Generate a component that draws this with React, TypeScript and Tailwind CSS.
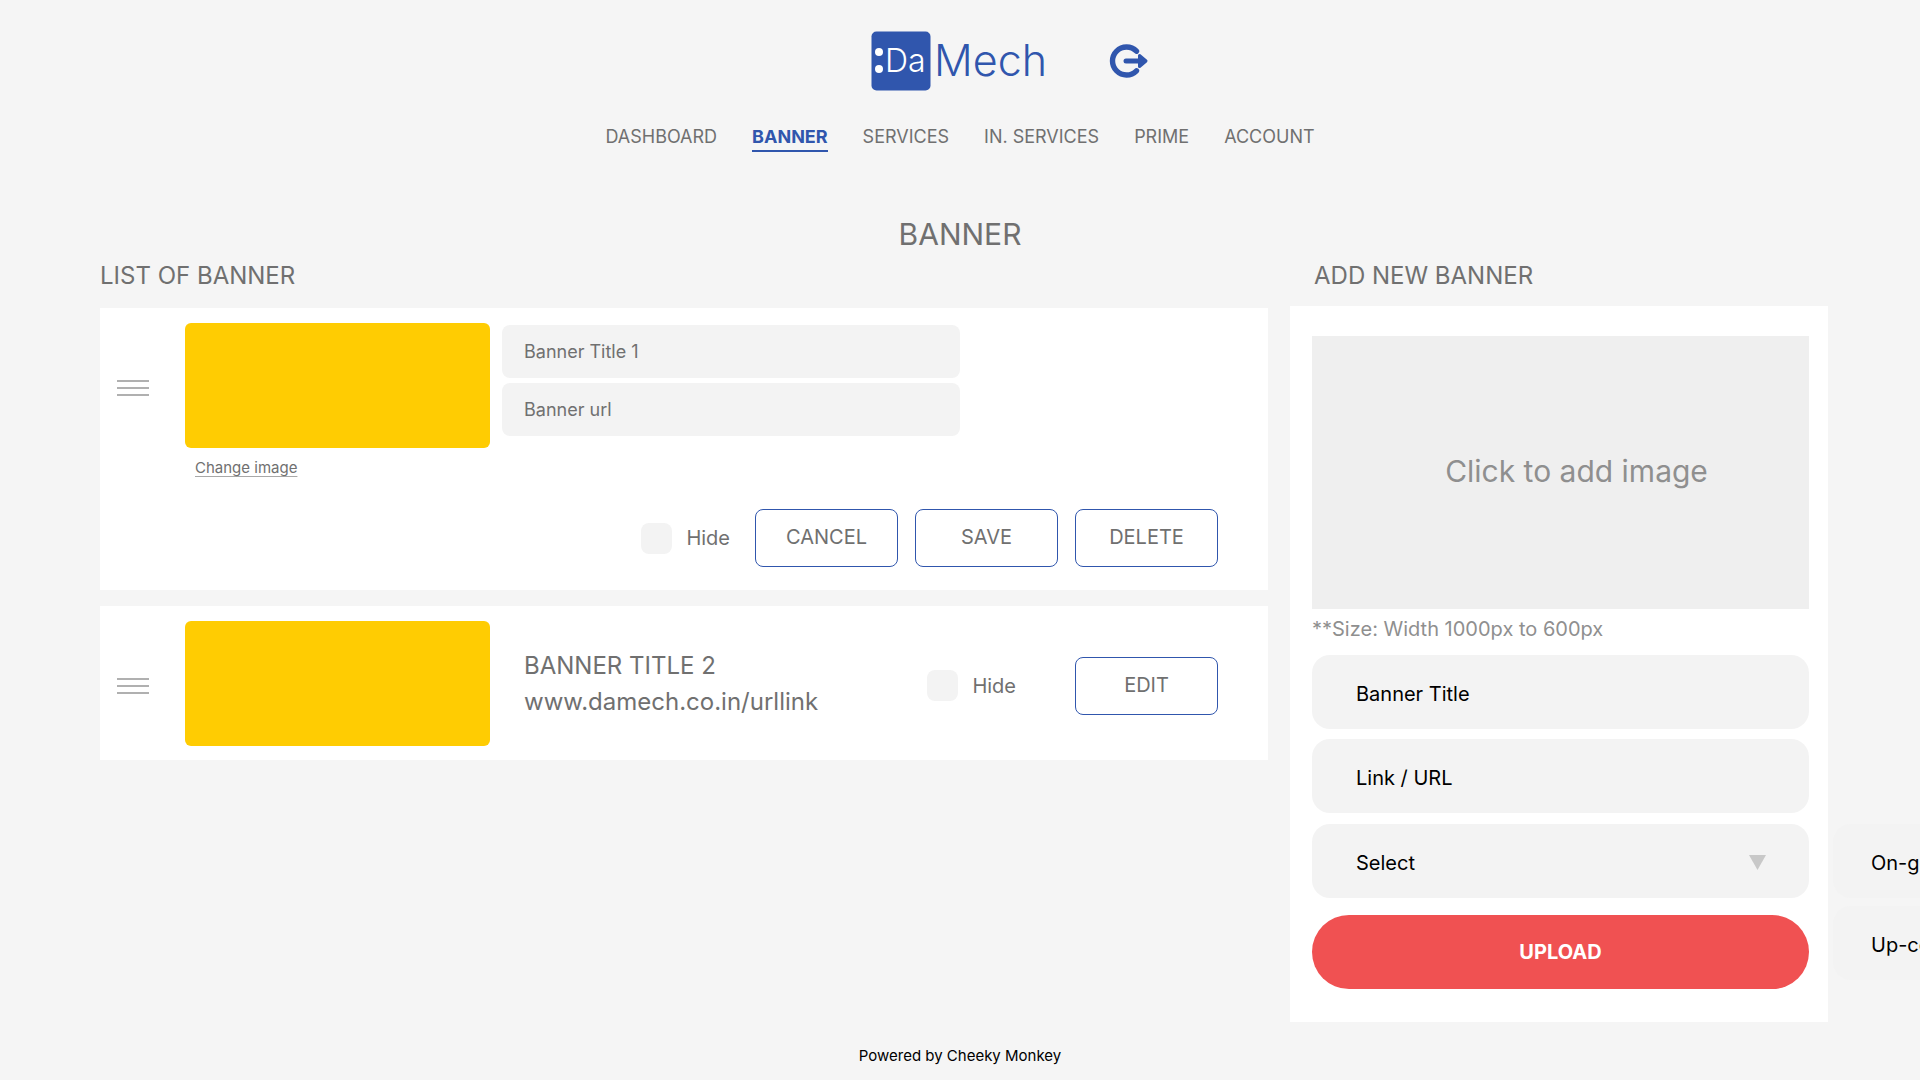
import React from "react";

const NAV = ["DASHBOARD", "BANNER", "SERVICES", "IN. SERVICES", "PRIME", "ACCOUNT"];

function Logo() {
  return (
    <svg width="178" height="60" viewBox="0 0 178 60" role="img" aria-label="DaMech" fontFamily="Inter, sans-serif">
      <rect x="0.5" y="0.5" width="59" height="59" rx="5" fill="#3056ad" />
      <circle cx="8" cy="21" r="4" fill="#fff" />
      <circle cx="8" cy="38" r="4" fill="#fff" />
      <text x="14" y="41" fontSize="32" fontWeight="300" fill="#fff">
        Da
      </text>
      <text x="63" y="45" fontSize="43" fontWeight="300" fill="#3056ad">
        Mech
      </text>
    </svg>
  );
}

function ExitIcon() {
  return (
    <svg width="40" height="36" viewBox="0 0 40 36" fill="none" aria-hidden="true">
      <path d="M27.5 8.2A14 14 0 1 0 27.5 27.8" stroke="#3056ad" strokeWidth="5.4" strokeLinecap="round" />
      <path d="M17 18H32" stroke="#3056ad" strokeWidth="5" strokeLinecap="round" />
      <path d="M30.5 12.5L37 18L30.5 23.5Z" fill="#3056ad" stroke="#3056ad" strokeWidth="3" strokeLinejoin="round" />
    </svg>
  );
}

function DragHandle() {
  return (
    <button type="button" aria-label="Reorder banner" className="flex w-8 shrink-0 flex-col gap-[5px]">
      <span className="h-0.5 w-full bg-[#b0b0b0]" />
      <span className="h-0.5 w-full bg-[#b0b0b0]" />
      <span className="h-0.5 w-full bg-[#b0b0b0]" />
    </button>
  );
}

function HideToggle() {
  return (
    <label className="flex items-center gap-3.5 text-xl">
      <input
        type="checkbox"
        className="size-[31px] appearance-none rounded-lg bg-[#f3f3f3] checked:bg-[#3056ad]"
      />
      Hide
    </label>
  );
}

function OutlineButton({ children }: { children: React.ReactNode }) {
  return (
    <button
      type="button"
      className="h-[58px] w-[143px] rounded-lg border border-[#3056ad] bg-white pb-0.5 text-xl"
    >
      {children}
    </button>
  );
}

function EditingBanner() {
  return (
    <article className="bg-white pt-[15px] pr-[50px] pb-[23px] pl-[17px]">
      <div className="flex items-start">
        <div className="flex h-[130px] items-center">
          <DragHandle />
        </div>
        <div className="ml-9 w-[305px] shrink-0">
          <div className="h-[125px] rounded-md bg-[#ffcc02]" />
          <button
            type="button"
            className="mt-2.5 ml-2.5 text-[15px] leading-5 underline decoration-[#a8a8a8] underline-offset-3"
          >
            Change image
          </button>
        </div>
        <div className="mt-0.5 ml-3 flex w-[458px] flex-col gap-[5px]">
          <input
            aria-label="Banner title"
            defaultValue="Banner Title 1"
            className="h-[53px] w-full rounded-lg bg-[#f3f3f3] px-[22px] text-lg"
          />
          <input
            aria-label="Banner url"
            defaultValue="Banner url"
            className="h-[53px] w-full rounded-lg bg-[#f3f3f3] px-[22px] text-lg"
          />
        </div>
      </div>
      <div className="mt-[30px] flex items-center justify-end gap-[17px]">
        <div className="mr-2">
          <HideToggle />
        </div>
        <OutlineButton>CANCEL</OutlineButton>
        <OutlineButton>SAVE</OutlineButton>
        <OutlineButton>DELETE</OutlineButton>
      </div>
    </article>
  );
}

function BannerRow() {
  return (
    <article className="flex items-center bg-white pt-[15px] pr-[50px] pb-3.5 pl-[17px]">
      <div className="pt-1">
        <DragHandle />
      </div>
      <div className="ml-9 h-[125px] w-[305px] shrink-0 rounded-md bg-[#ffcc02]" />
      <div className="ml-[34px] text-2xl leading-9">
        <h3>BANNER TITLE 2</h3>
        <p>www.damech.co.in/urllink</p>
      </div>
      <div className="ml-auto flex items-center gap-[59px] pt-1">
        <HideToggle />
        <OutlineButton>EDIT</OutlineButton>
      </div>
    </article>
  );
}

function AddBannerForm() {
  const field =
    "h-[74px] w-full rounded-[18px] bg-[#f3f3f3] px-11 pt-1 text-xl text-black placeholder:text-black placeholder:opacity-100";
  return (
    <form className="bg-white px-[22px] pt-[30px] pr-[19px] pb-[33px]">
      <button
        type="button"
        className="h-[273px] w-full bg-[#efefef] pb-1 pl-8 text-3xl text-[#8f8f8f]"
      >
        Click to add image
      </button>
      <p className="mt-1.5 text-xl leading-7 text-[#8f8f8f]">**Size: Width 1000px to 600px</p>
      <div className="mt-3 flex flex-col gap-2.5">
        <input aria-label="Banner Title" placeholder="Banner Title" className={field} />
        <input aria-label="Link / URL" placeholder="Link / URL" className={field} />
        <div className="relative mt-px">
          <select aria-label="Banner status" className={field + " appearance-none"}>
            <option>Select</option>
          </select>
          <svg
            width="17"
            height="15"
            viewBox="0 0 17 15"
            className="pointer-events-none absolute top-[31px] right-[43px]"
            aria-hidden="true"
          >
            <path d="M0 0H17L8.5 15Z" fill="#c8c8c8" />
          </svg>
          <ul
            role="listbox"
            aria-label="Status options"
            className="absolute top-0 left-full ml-6 flex w-[497px] flex-col gap-2 text-xl text-black"
          >
            <li role="option" aria-selected="false" className="flex h-[74px] items-center rounded-[18px] bg-[#f3f3f3] px-[38px] pt-1">
              On-going
            </li>
            <li role="option" aria-selected="false" className="flex h-[74px] items-center rounded-[18px] bg-[#f3f3f3] px-[38px] pt-1">
              Up-coming
            </li>
          </ul>
        </div>
      </div>
      <button type="button" className="mt-[17px] h-[74px] w-full rounded-full bg-[#f05152] text-xl font-bold text-white">
        UPLOAD
      </button>
    </form>
  );
}

export default function App() {
  return (
    <div className="min-h-screen overflow-x-clip bg-[#f5f5f5] font-['Inter',sans-serif] text-[#707070]">
      <header className="pt-[31px]">
        <div className="grid grid-cols-[1fr_auto_1fr] items-center">
          <a href="#home" className="col-start-2">
            <Logo />
          </a>
          <button type="button" aria-label="Log out" className="ml-[60px] justify-self-start">
            <ExitIcon />
          </button>
        </div>
        <nav className="mt-[33px] flex justify-center gap-[35px] text-lg leading-[26px]">
          {NAV.map((item) => (
            <a
              key={item}
              href="#nav"
              className={
                item === "BANNER"
                  ? "border-b-2 border-[#3056ad] font-bold text-[#3056ad]"
                  : "border-b-2 border-transparent"
              }
            >
              {item}
            </a>
          ))}
        </nav>
      </header>
      <main>
        <h1 className="mt-[62px] text-center text-3xl leading-10">BANNER</h1>
        <div className="flex items-start gap-[22px] pr-[92px] pl-[100px]">
          <section className="min-w-0 flex-1">
            <h2 className="mt-[6px] mb-4 text-2xl leading-8">LIST OF BANNER</h2>
            <div className="flex flex-col gap-4">
              <EditingBanner />
              <BannerRow />
            </div>
          </section>
          <section className="w-[538px] shrink-0">
            <h2 className="mt-[6px] mb-3.5 pl-6 text-2xl leading-8">ADD NEW BANNER</h2>
            <AddBannerForm />
          </section>
        </div>
      </main>
      <footer className="pt-6 text-center text-[15px] leading-5 text-black">Powered by Cheeky Monkey</footer>
    </div>
  );
}
